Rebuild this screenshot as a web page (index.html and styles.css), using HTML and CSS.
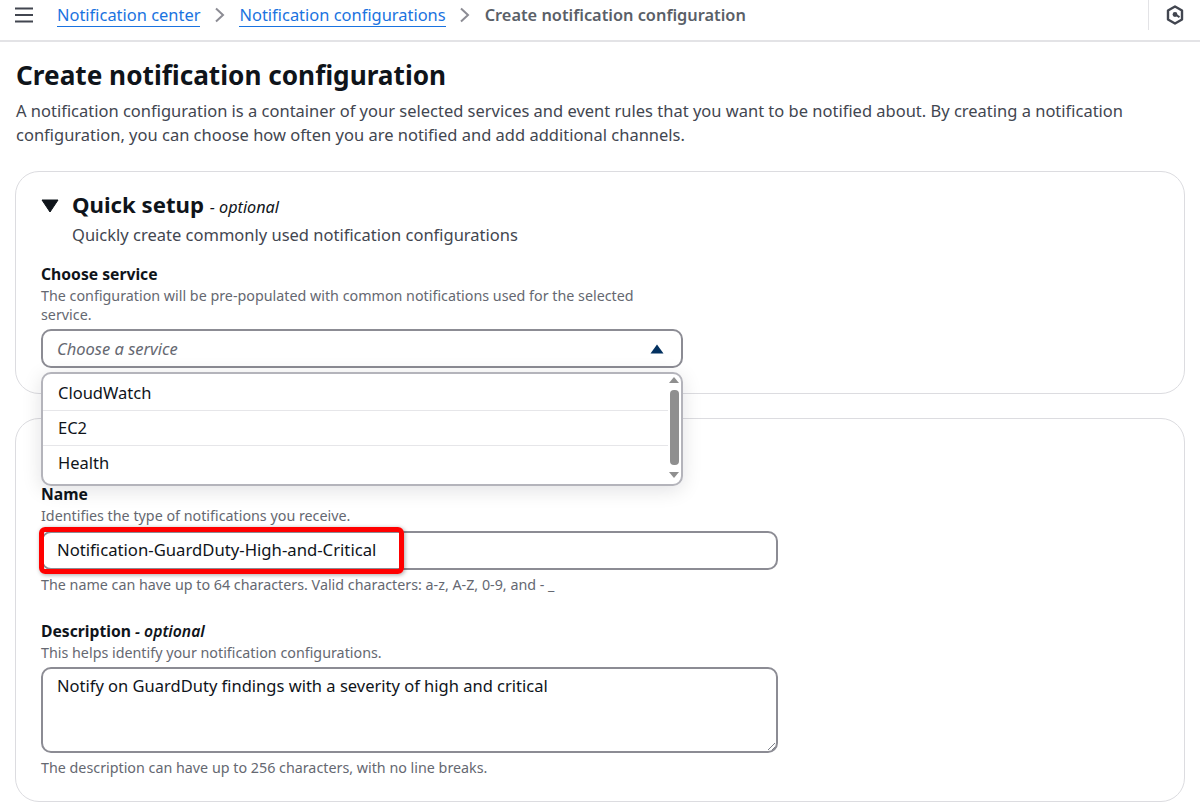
FILE: index.html
```html
<!DOCTYPE html>
<html lang="en">
<head>
  <meta charset="UTF-8">
  <title>Create notification configuration</title>
  <link rel="stylesheet" href="styles.css">
</head>
<body>
  <div class="topbar">
    <svg class="menu-icon" width="18" height="16" viewBox="0 0 18 16"><path d="M0 1.5h18M0 8h18M0 14.5h18" stroke="#424650" stroke-width="2" fill="none"/></svg>
    <nav class="crumbs">
      <a href="#">Notification center</a>
      <svg class="crumb-sep" width="12" height="16" viewBox="0 0 12 16"><path d="M2 1.5l7 6.5-7 6.5" stroke="#8c8c94" stroke-width="2" fill="none"/></svg>
      <a href="#">Notification configurations</a>
      <svg class="crumb-sep" width="12" height="16" viewBox="0 0 12 16"><path d="M2 1.5l7 6.5-7 6.5" stroke="#8c8c94" stroke-width="2" fill="none"/></svg>
      <span class="crumb-current">Create notification configuration</span>
    </nav>
    <div class="topbar-right">
      <svg width="18" height="20" viewBox="0 0 18 20"><path d="M9 1.5l7 4v9l-7 4-7-4v-9z" stroke="#424650" stroke-width="2.4" fill="none" stroke-linejoin="round"/><circle cx="9" cy="9.5" r="2.4" fill="#424650"/><path d="M10 10l3.5 2.2" stroke="#424650" stroke-width="2"/></svg>
    </div>
  </div>

  <main class="page">
    <h1>Create notification configuration</h1>
    <p class="intro">A notification configuration is a container of your selected services and event rules that you want to be notified about. By creating a notification configuration, you can choose how often you are notified and add additional channels.</p>

    <section class="card card-quick">
      <div class="quick-head">
        <svg class="caret" width="18" height="14" viewBox="0 0 18 14"><path d="M1 1h16L9 13z" fill="#0f141a" stroke="#0f141a" stroke-linejoin="round"/></svg>
        <div>
          <h2>Quick setup <span class="optional">- optional</span></h2>
          <div class="quick-sub">Quickly create commonly used notification configurations</div>
        </div>
      </div>
      <div class="label">Choose service</div>
      <div class="hint hint-wrap">The configuration will be pre-populated with common notifications used for the selected service.</div>
      <div class="select-wrap">
        <div class="select">
          <span class="placeholder">Choose a service</span>
          <svg width="14" height="10" viewBox="0 0 14 10"><path d="M7 .5l6.5 9H.5z" fill="#033160"/></svg>
        </div>
        <div class="dropdown">
          <div class="options">
            <div class="option">CloudWatch</div>
            <div class="option">EC2</div>
            <div class="option">Health</div>
          </div>
          <div class="scroller">
            <span class="arrow-up"></span>
            <span class="thumb"></span>
            <span class="arrow-down"></span>
          </div>
        </div>
      </div>
    </section>

    <section class="card card-details">
      <div class="label">Name</div>
      <div class="hint">Identifies the type of notifications you receive.</div>
      <div class="input-wrap">
        <div class="input">Notification-GuardDuty-High-and-Critical</div>
        <div class="highlight"></div>
      </div>
      <div class="hint hint-after">The name can have up to 64 characters. Valid characters: a-z, A-Z, 0-9, and - _</div>

      <div class="label label-gap">Description <i>- optional</i></div>
      <div class="hint">This helps identify your notification configurations.</div>
      <div class="textarea">
        Notify on GuardDuty findings with a severity of high and critical
        <svg class="resize" width="9" height="9" viewBox="0 0 9 9"><path d="M1 8l7-7M5 8l3-3" stroke="#7d8089" stroke-width="1"/></svg>
      </div>
      <div class="hint hint-after">The description can have up to 256 characters, with no line breaks.</div>
    </section>
  </main>
</body>
</html>
```

FILE: styles.css
```css
body {
  margin: 0;
  background: #fff;
  color: #0f141a;
  font-family: "Noto Sans", sans-serif;
  font-size: 16.5px;
  line-height: 24px;
  overflow: hidden;
}
.topbar {
  height: 30px;
  padding: 0 0 10px 15px;
  border-bottom: 2px solid #e3e3e6;
  display: flex;
  align-items: center;
}
.menu-icon {
  margin-right: 24px;
}
.crumbs {
  flex: 1;
  display: flex;
  align-items: center;
  gap: 13.5px;
  font-size: 16.45px;
}
.crumbs a {
  color: #1a73e0;
  text-decoration: none;
  border-bottom: 1px solid #1a73e0;
  line-height: 22px;
}
.crumb-current {
  color: #5a5f68;
  font-weight: 600;
  font-size: 16.35px;
}
.topbar-right {
  width: 51px;
  height: 30px;
  border-left: 1px solid #e3e3e6;
  display: flex;
  align-items: center;
  justify-content: center;
}
.page {
  padding: 0 15px;
}
h1 {
  margin: 15px 1px 6px;
  font-size: 26.2px;
  line-height: 36px;
  font-weight: 700;
}
.intro {
  margin: 0 1px 24px;
  color: #424650;
  font-size: 16.49px;
}
.card {
  border: 1px solid #dcdce0;
  border-radius: 24px;
  margin-bottom: 24px;
}
.card-quick {
  height: 203px;
  padding: 18px 25px 0;
}
.quick-head {
  display: flex;
  gap: 13px;
  margin-bottom: 17px;
}
.caret {
  margin-top: 9px;
  flex: none;
}
h2 {
  margin: 0;
  font-size: 22.2px;
  line-height: 30px;
  font-weight: 700;
}
.optional {
  font-size: 16.2px;
  font-weight: 400;
  font-style: italic;
}
.quick-sub {
  color: #424650;
  margin-top: 1px;
}
.label {
  font-size: 15.7px;
  line-height: 20px;
  font-weight: 700;
  margin-bottom: 2px;
}
.label i {
  font-weight: 600;
}
.label-gap {
  margin-top: 27px;
}
.hint {
  font-size: 14.3px;
  line-height: 19px;
  color: #656871;
}
.hint-wrap {
  width: 620px;
}
.hint-after {
  margin-top: 5px;
}
.select-wrap {
  position: relative;
  width: 642px;
  margin-top: 5px;
}
.select {
  height: 35px;
  border: 2px solid #8c8c94;
  border-radius: 10px;
  display: flex;
  align-items: center;
  justify-content: space-between;
  padding: 0 17px 0 14px;
}
.placeholder {
  color: #656871;
  font-style: italic;
}
.dropdown {
  position: absolute;
  top: 43px;
  left: 0;
  right: 0;
  height: 110px;
  background: #fff;
  border: 2px solid #b4b4bb;
  border-radius: 10px;
  box-shadow: 0 4px 20px rgba(0, 7, 22, 0.12);
  display: flex;
  z-index: 2;
  overflow: hidden;
}
.options {
  flex: 1;
  padding-top: 2px;
}
.option {
  height: 34px;
  line-height: 34px;
  padding-left: 15px;
  border-bottom: 1px solid #e6e6e9;
}
.option:last-child {
  border-bottom: 0;
}
.scroller {
  width: 12px;
  padding: 3px 1px 0 0;
  display: flex;
  flex-direction: column;
  align-items: center;
  gap: 7px;
}
.arrow-up {
  border: 5px solid transparent;
  border-top: 0;
  border-bottom: 6px solid #8f8f8f;
}
.arrow-down {
  border: 5px solid transparent;
  border-bottom: 0;
  border-top: 6px solid #8f8f8f;
}
.thumb {
  width: 9px;
  height: 75px;
  flex: none;
  background: #8f8f8f;
  border-radius: 4px;
}
.card-details {
  height: 317px;
  padding: 65px 25px 0;
}
.input-wrap {
  position: relative;
  width: 737px;
  margin-top: 6px;
}
.input {
  height: 35px;
  line-height: 33px;
  border: 2px solid #8c8c94;
  border-radius: 10px;
  padding-left: 14px;
  font-size: 16.7px;
}
.highlight {
  position: absolute;
  top: -4px;
  left: -2px;
  width: 365px;
  height: 47px;
  border: 5px solid #f00;
  border-radius: 6px;
  box-shadow: 1px 1px 4px rgba(0, 0, 0, 0.35);
  box-sizing: border-box;
}
.textarea {
  position: relative;
  box-sizing: border-box;
  width: 737px;
  height: 86px;
  margin-top: 5px;
  border: 2px solid #8c8c94;
  border-radius: 10px;
  padding: 5px 14px;
}
.resize {
  position: absolute;
  right: 0;
  bottom: 0;
}
```
